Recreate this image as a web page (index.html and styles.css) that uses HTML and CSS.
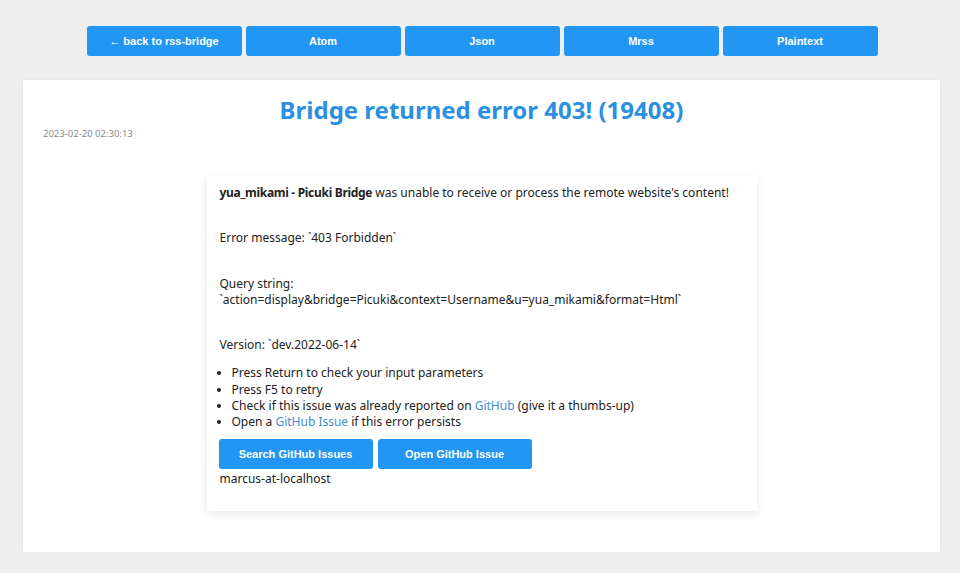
FILE: index.html
```html
<!DOCTYPE html>
<html lang="en">
<head>
    <meta charset="UTF-8">
    <meta name="viewport" content="width=device-width, initial-scale=1.0">
    <title>Bridge returned error 403! (19408)</title>
    <link rel="stylesheet" href="styles.css">
</head>
<body>
    <nav class="buttons">
        <a class="button" href="#">&larr; back to rss-bridge</a>
        <a class="button" href="#">Atom</a>
        <a class="button" href="#">Json</a>
        <a class="button" href="#">Mrss</a>
        <a class="button" href="#">Plaintext</a>
    </nav>
    <section class="feed">
        <h1 class="feed-title">Bridge returned error 403! (19408)</h1>
        <time class="feed-date">2023-02-20 02:30:13</time>
        <div class="error-box">
            <p class="first"><strong>yua_mikami - Picuki Bridge</strong> was unable to receive or process the remote website's content!</p>
            <p>Error message: `403 Forbidden`</p>
            <p>Query string:<br>`action=display&amp;bridge=Picuki&amp;context=Username&amp;u=yua_mikami&amp;format=Html`</p>
            <p>Version: `dev.2022-06-14`</p>
            <ul>
                <li>Press Return to check your input parameters</li>
                <li>Press F5 to retry</li>
                <li>Check if this issue was already reported on <a href="#">GitHub</a> (give it a thumbs-up)</li>
                <li>Open a <a href="#">GitHub Issue</a> if this error persists</li>
            </ul>
            <div class="actions">
                <a class="button" href="#">Search GitHub Issues</a>
                <a class="button" href="#">Open GitHub Issue</a>
            </div>
            <div class="maintainer">marcus-at-localhost</div>
        </div>
    </section>
</body>
</html>
```

FILE: styles.css
```css
body {
    font-family: "Noto Sans", sans-serif;
    margin: 0;
    padding: 26px 20px 0 23px;
    background-color: #efefef;
    color: #222;
}
.buttons {
    display: flex;
    justify-content: center;
    gap: 4px;
    margin-bottom: 24px;
    padding-left: 1px;
}
.button {
    display: block;
    width: 155px;
    height: 30px;
    line-height: 30px;
    text-align: center;
    background-color: #2196f3;
    color: white;
    font-family: "Liberation Sans", Arial, sans-serif;
    font-weight: bold;
    font-size: 11px;
    text-decoration: none;
    border-radius: 3px;
}
.feed {
    background-color: white;
    height: 472px;
    box-sizing: border-box;
    padding: 14px 20px 0;
    box-shadow: 0 1px 4px rgba(0, 0, 0, 0.08);
}
.feed-title {
    margin: 0;
    text-align: center;
    color: #2b8fe2;
    font-size: 24px;
    line-height: 31px;
}
.feed-date {
    display: block;
    font-size: 9.5px;
    color: #8a8a8a;
    margin-top: 2px;
}
.error-box {
    width: 550px;
    margin: 36px auto 0;
    box-sizing: border-box;
    padding: 9px 13px 24px 12px;
    box-shadow: 0 3px 10px rgba(0, 0, 0, 0.09);
    font-size: 12px;
    line-height: 16.3px;
}
.error-box strong {
    letter-spacing: -0.3px;
}
.error-box p {
    margin: 29px 0 0 1px;
}
.error-box p.first {
    margin-top: 0;
}
.error-box ul {
    margin: 12px 0 0;
    padding-left: 13px;
}
.error-box a {
    color: #3b8fd0;
    text-decoration: none;
}
.actions {
    display: flex;
    gap: 5px;
    margin-top: 8px;
}
.actions .button {
    width: 154px;
    color: white;
}
.maintainer {
    margin: 2px 0 0 1px;
}
```
